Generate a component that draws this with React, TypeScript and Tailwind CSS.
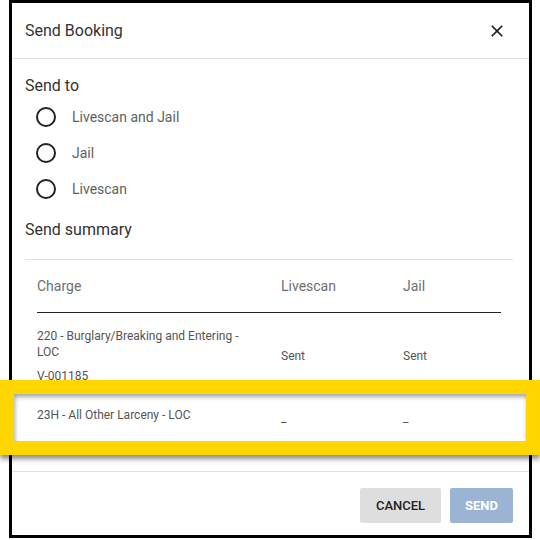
const options = ['Livescan and Jail', 'Jail', 'Livescan']

function CloseIcon() {
  return (
    <svg viewBox="0 0 24 24" className="h-5 w-5 fill-[#222]">
      <path d="M19 6.41 17.59 5 12 10.59 6.41 5 5 6.41 10.59 12 5 17.59 6.41 19 12 13.41 17.59 19 19 17.59 13.41 12z" />
    </svg>
  )
}

function Radio({ label }: { label: string }) {
  return (
    <label className="flex h-[36px] items-center gap-[16px] pl-[11px]">
      <span className="h-[20px] w-[20px] rounded-full border-2 border-[#222]" />
      <span className="text-[14px] text-[#5f5f5f]">{label}</span>
    </label>
  )
}

export default function App() {
  return (
    <div className="relative h-[540px] w-[540px] overflow-hidden bg-white font-['Roboto',sans-serif]">
      <div className="ml-[9px] flex h-[538px] w-[523px] flex-col border-[3px] border-black bg-white">
        {/* header */}
        <div className="flex h-[56px] items-center justify-between border-b border-[#e0e0e0] pl-[13px] pr-[22px]">
          <h2 className="text-[16px] text-[#333]">Send Booking</h2>
          <button className="flex h-5 w-5 items-center justify-center">
            <CloseIcon />
          </button>
        </div>

        {/* body */}
        <div className="flex-1 px-[13px] pt-[15px]">
          <h3 className="text-[16px] leading-[24px] text-[#333]">Send to</h3>
          <div className="mt-[1px] flex flex-col">
            {options.map((o) => (
              <Radio key={o} label={o} />
            ))}
          </div>

          <h3 className="mt-[11px] text-[16px] leading-[24px] text-[#333]">Send summary</h3>

          <div className="mt-[17px] w-[488px] border-t border-[#e0e0e0] px-[12px]">
            <div className="flex h-[53px] items-center border-b border-[#222] text-[14px] text-[#707070]">
              <div className="w-[244px]">Charge</div>
              <div className="w-[122px]">Livescan</div>
              <div className="flex-1">Jail</div>
            </div>
            <div className="flex items-center py-[15px] text-[12px] leading-[16px] text-[#555]">
              <div className="w-[244px]">
                <div className="w-[212px]">220 - Burglary/Breaking and Entering - LOC</div>
                <div className="mt-2">V-001185</div>
              </div>
              <div className="w-[122px]">Sent</div>
              <div className="flex-1">Sent</div>
            </div>
            {/* second row sits under the highlight callout */}
            <div className="invisible flex items-center py-[8px] text-[12px] leading-[16px] text-[#555]">
              <div className="w-[244px]">23H - All Other Larceny - LOC</div>
              <div className="w-[122px]">_</div>
              <div className="flex-1">_</div>
            </div>
          </div>
        </div>

        {/* footer */}
        <div className="flex justify-end gap-[9px] border-t border-[#e0e0e0] pb-[12px] pr-[16px] pt-[16px]">
          <button className="h-[35px] w-[81px] rounded-[2px] bg-[#dedede] text-[13px] font-medium text-[#222]">
            CANCEL
          </button>
          <button className="h-[35px] w-[63px] rounded-[2px] bg-[#9bb4d3] text-[13px] font-bold text-white">
            SEND
          </button>
        </div>
      </div>

      {/* highlight callout */}
      <div className="absolute left-0 top-[380px] h-[75px] w-[540px] bg-[#ffd600] p-[14px] shadow-[0_4px_5px_rgba(0,0,0,0.45)]">
        <div className="flex h-full bg-white pl-[23px] pt-[13px] text-[12px] leading-[16px] text-[#555] shadow-[inset_1px_3px_4px_rgba(0,0,0,0.35)]">
          <div className="w-[244px]">23H - All Other Larceny - LOC</div>
          <div className="w-[122px] pt-[3px]">_</div>
          <div className="flex-1 pt-[3px]">_</div>
        </div>
      </div>
    </div>
  )
}
